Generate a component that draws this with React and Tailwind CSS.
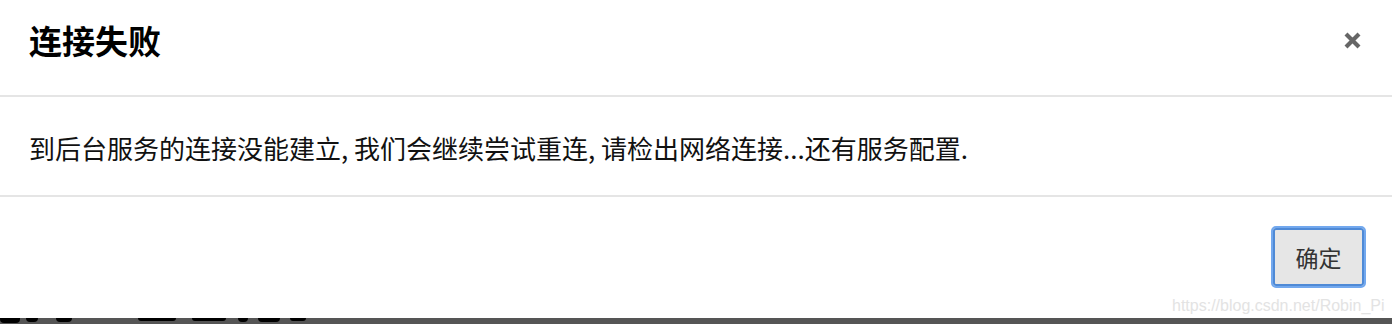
export default function App() {
    const cjk = { fontFamily: '"Noto Sans CJK SC", "Noto Sans", sans-serif' };
    return (
        <div className="relative w-[1392px] h-[324px] overflow-hidden bg-[#555555]" style={cjk}>
            <div className="flex flex-col h-[318px] bg-white">
                <div className="flex items-start justify-between h-[97px] pl-[29px] pr-[30px] pt-[24px] border-b-2 border-[#e5e5e5]">
                    <h1 className="text-[33px] font-bold text-black leading-none">连接失败</h1>
                    <button className="w-[20px] h-[20px] flex items-center justify-center mt-[6px]">
                        <svg width="19" height="19" viewBox="0 0 19 19">
                            <path d="M3 3 L16 16 M16 3 L3 16" stroke="#666666" strokeWidth="4.2" strokeLinecap="butt" />
                        </svg>
                    </button>
                </div>
                <div className="flex items-center h-[100px] pl-[29px] pt-[4px] border-b-2 border-[#e5e5e5]">
                    <p className="text-[26px] leading-none text-[#111111]">
                        到后台服务的连接没能建立, 我们会继续尝试重连, 请检出网络连接...还有服务配置.
                    </p>
                </div>
                <div className="flex flex-1 justify-end pt-[29px] pr-[26px]">
                    <button className="w-[95px] h-[62px] rounded-[5px] bg-[#e6e6e6] border-[2px] border-[#72a8ee] shadow-[inset_0_0_0_2px_#4f8ad6] text-[23px] text-[#333333]">
                        确定
                    </button>
                </div>
            </div>
            <div className="absolute left-[1172px] top-[294px] text-[16px] text-[#e3e3e3]" style={{ fontFamily: '"Liberation Sans", Arial, sans-serif' }}>
                https://blog.csdn.net/Robin_Pi
            </div>
            <div className="flex items-start h-[6px]">
                <span className="w-[20px] h-[5px] bg-black rounded-b-[4px]" />
                <span className="w-[12px] h-[4px] bg-black rounded-b-[4px] ml-[6px]" />
                <span className="w-[16px] h-[4px] bg-black rounded-b-[6px] ml-[18px]" />
                <span className="w-[38px] h-[3px] bg-black rounded-b-[6px] ml-[66px]" />
                <span className="w-[34px] h-[3px] bg-black rounded-b-[6px] ml-[16px]" />
                <span className="w-[10px] h-[4px] bg-black rounded-b-[4px] ml-[12px]" />
                <span className="w-[22px] h-[4px] bg-black rounded-b-[4px] ml-[10px]" />
                <span className="w-[16px] h-[3px] bg-black rounded-b-[4px] ml-[10px]" />
            </div>
        </div>
    );
}
